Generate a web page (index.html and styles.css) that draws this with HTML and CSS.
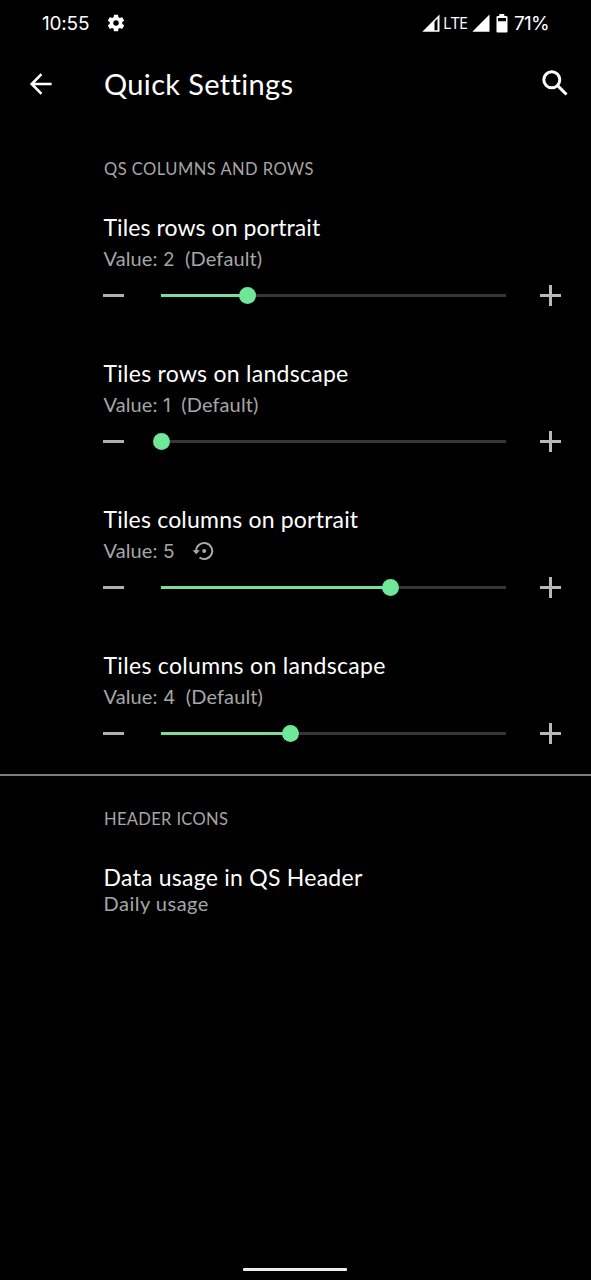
FILE: index.html
```html
<!DOCTYPE html>
<html lang="en">
<head>
<meta charset="utf-8">
<title>Quick Settings</title>
<link rel="stylesheet" href="styles.css">
</head>
<body>
<div class="screen">
  <div class="status">
    <span class="clock">10:55</span>
    <svg class="gear" viewBox="0 0 24 24"><path fill="#fff" d="M19.4 13c.04-.33.07-.66.07-1s-.03-.68-.07-1l2.1-1.65c.2-.15.24-.42.12-.64l-2-3.46c-.12-.22-.38-.3-.6-.22l-2.5 1c-.52-.4-1.08-.73-1.7-.98l-.37-2.65A.5.5 0 0 0 14 2h-4a.5.5 0 0 0-.5.42l-.37 2.65c-.62.25-1.18.58-1.7.98l-2.5-1c-.22-.08-.48 0-.6.22l-2 3.46c-.12.22-.07.49.12.64L4.57 11c-.04.32-.07.66-.07 1s.03.67.07 1l-2.12 1.65c-.19.15-.24.42-.12.64l2 3.46c.12.22.38.3.6.22l2.5-1c.52.4 1.08.73 1.7.98l.37 2.65c.04.24.25.4.5.4h4c.25 0 .46-.16.5-.4l.37-2.65c.62-.25 1.18-.58 1.7-.98l2.5 1c.22.08.48 0 .6-.22l2-3.46c.12-.22.08-.49-.12-.64zM12 15.3a3.3 3.3 0 1 1 0-6.6 3.3 3.3 0 0 1 0 6.6z"/></svg>
    <span class="spacer"></span>
    <svg class="signal" viewBox="0 0 18 18"><path fill="#fff" fill-rule="evenodd" d="M.3 17.7 17.5.5v17.2zM12.5 7.7v8.5h3V4.5z"/></svg>
    <span class="lte">LTE</span>
    <svg class="signal" viewBox="0 0 18 18"><path fill="#fff" d="M.3 17.7 17.5.5v17.2z"/></svg>
    <svg class="battery" viewBox="0 0 12 20"><path fill="#fff" fill-rule="evenodd" d="M3.3 1h5v2h2.2q1 0 1 1v14.5q0 1-1 1h-9q-1 0-1-1V4q0-1 1-1h1.8zM2 5v3.2h8V5z"/></svg>
    <span class="percent">71%</span>
  </div>
  <div class="toolbar">
    <svg class="back" viewBox="0 0 24 24"><path d="M22.6 12H3M12.5 2.2 2.7 12l9.8 9.8" fill="none" stroke="#fff" stroke-width="2.6"/></svg>
    <h1 class="heading">Quick Settings</h1>
    <svg class="search" viewBox="0 0 28 28"><g fill="none" stroke="#fff" stroke-width="3"><circle cx="10.8" cy="10.8" r="8"/><path d="m16.6 16.6 8.9 8.9"/></g></svg>
  </div>
  <h2 class="category cat-grid">QS COLUMNS AND ROWS</h2>

  <div class="pref">
    <div class="title t1">Tiles rows on portrait</div>
    <div class="value">Value: <span class="num">2</span>&nbsp; (Default)</div>
    <div class="control"><i class="minus"></i><div class="track"><div class="fill" style="width:25%"></div><i class="thumb"></i></div><i class="plus"></i></div>
  </div>
  <div class="pref">
    <div class="title t2">Tiles rows on landscape</div>
    <div class="value">Value: <span class="num">1</span>&nbsp; (Default)</div>
    <div class="control"><i class="minus"></i><div class="track"><div class="fill" style="width:0%"></div><i class="thumb"></i></div><i class="plus"></i></div>
  </div>
  <div class="pref">
    <div class="title t3">Tiles columns on portrait</div>
    <div class="value">Value: <span class="num">5</span><svg class="reset" viewBox="0 0 22 20"><path d="M4.2 12V9.5A8 8 0 1 1 7.5 16.5" fill="none" stroke="#aaa" stroke-width="2"/><path d="M.5 9.3h7.4L4.2 13.2z" fill="#aaa"/><circle cx="12.2" cy="10" r="2" fill="#aaa"/></svg></div>
    <div class="control"><i class="minus"></i><div class="track"><div class="fill" style="width:66.6%"></div><i class="thumb"></i></div><i class="plus"></i></div>
  </div>
  <div class="pref">
    <div class="title t4">Tiles columns on landscape</div>
    <div class="value">Value: <span class="num">4</span>&nbsp; (Default)</div>
    <div class="control"><i class="minus"></i><div class="track"><div class="fill" style="width:37.5%"></div><i class="thumb"></i></div><i class="plus"></i></div>
  </div>

  <div class="divider"></div>
  <h2 class="category cat-icons">HEADER ICONS</h2>
  <div class="title t5">Data usage in QS Header</div>
  <div class="value daily">Daily usage</div>
  <div class="home"></div>
</div>
</body>
</html>
```
FILE: styles.css
```css
* { box-sizing: border-box; }
body { margin: 0; background: #000; color: #fff; font-family: Lato, sans-serif; }
.screen { width: 591px; height: 1280px; display: flex; flex-direction: column; overflow: hidden; white-space: nowrap; }
svg { display: block; flex: none; }
.status { height: 46px; padding: 0 42px 0 42px; display: flex; align-items: center; font-family: Inter, sans-serif; font-size: 19px; }
.clock { width: 64px; letter-spacing: -.2px; }
.gear { width: 20px; height: 20px; }
.spacer { flex: 1; }
.signal { width: 18px; height: 18px; }
.lte { width: 28px; margin-left: 3px; margin-right: 1px; font-family: "Open Sans", sans-serif; font-size: 16px; letter-spacing: -.6px; }
.signal + .battery { margin-left: 6px; }
.battery { width: 12px; height: 20px; }
.percent { width: 35px; margin-left: 6px; letter-spacing: -.8px; }
.toolbar { height: 76px; padding: 0 22px 0 29px; display: flex; align-items: center; }
.back { width: 24px; height: 24px; }
.heading { flex: 1; margin: 0 0 2px 51px; font-size: 29px; font-weight: 400; letter-spacing: .35px; }
.search { width: 28px; height: 28px; margin-bottom: 2px; }
.category { margin: 0; padding-left: 104px; height: 24px; line-height: 24px; font-size: 16.5px; font-weight: 400; color: #a6a6a6; letter-spacing: .48px; }
.cat-grid { margin: 35px 0 30px; }
.pref { height: 146px; }
.title { padding-left: 103.5px; height: 32px; line-height: 32px; font-size: 23px; letter-spacing: .2px; }
.t1 { letter-spacing: .09px; }
.t2 { letter-spacing: .27px; }
.t4 { letter-spacing: .32px; }
.t5 { letter-spacing: .25px; }
.value { padding-left: 103.5px; height: 30px; line-height: 30px; font-size: 20px; letter-spacing: .12px; color: #a6a6a6; display: flex; align-items: baseline; white-space: pre; }
.num { font-family: Inter, sans-serif; font-size: 19px; }
.reset { width: 22px; height: 20px; margin: 1px 0 0 17.5px; align-self: center; }
.control { height: 45px; padding: 0 30px 0 103px; display: flex; align-items: center; }
.minus { width: 21px; height: 3px; background: #b0b0b0; }
.track { width: 345px; height: 3px; margin-left: 37px; background: #363636; display: flex; align-items: center; }
.fill { height: 3px; background: #7bdc9b; }
.thumb { flex: none; width: 17px; height: 17px; margin-left: -8.5px; border-radius: 50%; background: #70e699; }
.plus { width: 21px; height: 21px; margin-left: 34px; background: linear-gradient(#b8b8b8, #b8b8b8) center / 21px 3px no-repeat, linear-gradient(#b8b8b8, #b8b8b8) center / 3px 21px no-repeat; }
.divider { height: 2px; margin-top: -21px; background: #7c7c7c; }
.cat-icons { margin: 31px 0 30px; letter-spacing: .35px; }
.daily { height: 22px; line-height: 20px; letter-spacing: .5px; }
.home { width: 104px; height: 3px; margin: auto auto 9px 243px; background: #eee; border-radius: 1px; }
```
